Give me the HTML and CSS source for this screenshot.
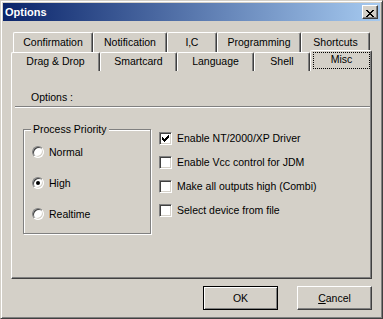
FILE: index.html
```html
<!DOCTYPE html>
<html lang="en">
<head>
    <meta charset="UTF-8">
    <meta name="viewport" content="width=device-width, initial-scale=1.0">
    <title>Options</title>
    <link rel="stylesheet" href="styles.css">
</head>
<body>
    <div class="window">
        <div class="titlebar">
            <span class="title">Options</span>
            <button class="close" aria-label="Close">
                <svg width="8" height="7" viewBox="0 0 8 7" shape-rendering="crispEdges">
                    <path d="M0 0h2v1H0zM6 0h2v1H6zM1 1h2v1H1zM5 1h2v1H5zM2 2h4v1H2zM3 3h2v1H3zM2 4h4v1H2zM1 5h2v1H1zM5 5h2v1H5zM0 6h2v1H0zM6 6h2v1H6z" fill="#000"/>
                </svg>
            </button>
        </div>

        <div class="dialog">
            <div class="tabs">
                <div class="tab-row back">
                    <div class="tab">Confirmation</div>
                    <div class="tab">Notification</div>
                    <div class="tab">I&#x201A;C</div>
                    <div class="tab">Programming</div>
                    <div class="tab">Shortcuts</div>
                </div>
                <div class="tab-row front">
                    <div class="tab">Drag &amp; Drop</div>
                    <div class="tab">Smartcard</div>
                    <div class="tab">Language</div>
                    <div class="tab">Shell</div>
                    <div class="tab selected"><span class="focus">Misc</span></div>
                </div>
            </div>

            <div class="panel">
                <div class="panel-head">Options :</div>
                <div class="separator"></div>
                <div class="panel-body">
                    <div class="group">
                        <div class="group-title">Process Priority</div>
                        <div class="radios">
                            <label class="radio-row"><span class="radio"></span>Normal</label>
                            <label class="radio-row"><span class="radio on"></span>High</label>
                            <label class="radio-row"><span class="radio"></span>Realtime</label>
                        </div>
                    </div>
                    <div class="checks">
                        <label class="check-row">
                            <span class="box">
                                <svg width="7" height="7" viewBox="0 0 7 7" shape-rendering="crispEdges">
                                    <path d="M6 0h1v1H6zM5 1h2v1H5zM0 2h1v1H0zM4 2h3v1H4zM0 3h2v1H0zM3 3h3v1H3zM0 4h5v1H0zM1 5h3v1H1zM2 6h1v1H2z" fill="#000"/>
                                </svg>
                            </span>Enable NT/2000/XP Driver
                        </label>
                        <label class="check-row"><span class="box"></span>Enable Vcc control for JDM</label>
                        <label class="check-row"><span class="box"></span>Make all outputs high (Combi)</label>
                        <label class="check-row"><span class="box"></span>Select device from file</label>
                    </div>
                </div>
            </div>

            <div class="buttons">
                <button class="btn default">OK</button>
                <button class="btn"><u>C</u>ancel</button>
            </div>
        </div>
    </div>
</body>
</html>
```

FILE: styles.css
```css
* {
  margin: 0;
  padding: 0;
  box-sizing: border-box;
}
body {
  margin: 0;
  background: #d4d0c8;
  font-family: "Liberation Sans", Arial, sans-serif;
  font-size: 10.5px;
  color: #000;
}

.window {
  width: 383px;
  height: 319px;
  padding: 2px;
  display: flex;
  flex-direction: column;
  background: #d4d0c8;
  border: 1px solid;
  border-color: #d4d0c8 #404040 #404040 #d4d0c8;
  box-shadow: inset 1px 1px #fff, inset -1px -1px #808080;
}

.titlebar {
  height: 18px;
  display: flex;
  justify-content: space-between;
  align-items: flex-start;
  padding: 0 2px;
  background: linear-gradient(to right, #0a246a, #a6caf0);
}
.title {
  color: #fff;
  font-weight: bold;
  font-size: 11px;
  line-height: 18px;
}
.close {
  width: 16px;
  height: 14px;
  margin-top: 2px;
  background: #d4d0c8;
  border: 1px solid;
  border-color: #fff #404040 #404040 #fff;
  box-shadow: inset -1px -1px #808080;
}
.close svg {
  display: block;
  margin: 2px auto 0;
}

.dialog {
  flex: 1;
  padding: 11px 8px 0;
}

/* tab strip, two rows */
.tab-row {
  display: grid;
}
.tab-row.back {
  grid-template-columns: 80px 74px 50px 84px 69px;
  height: 20px;
  margin: 0 2px;
}
.tab-row.front {
  grid-template-columns: 89px 77px 77px 56px 62px;
  height: 18px;
}
.tab {
  background: #d4d0c8;
  border: 1px solid;
  border-bottom: 0;
  border-color: #fff #404040 #404040 #fff;
  border-radius: 2px 2px 0 0;
  box-shadow: inset -1px 0 #808080;
  text-align: center;
  white-space: nowrap;
}
.back .tab {
  line-height: 19px;
}
.front .tab {
  line-height: 17px;
}
.tab.selected {
  position: relative;
  z-index: 1;
  align-self: start;
  height: 21px;
  margin-top: -2px;
}
.tab.selected .focus {
  display: block;
  height: 17px;
  margin: 1px 1px 0 2px;
  border: 1px dotted #000;
  line-height: 12px;
}

.panel {
  height: 209px;
  border: 1px solid;
  border-color: #fff #404040 #404040 #fff;
  box-shadow: inset -1px -1px #808080;
}
.panel-head {
  padding: 19px 0 0 19px;
  line-height: 14px;
}
.separator {
  margin: 2px 1px 0 3px;
  border-top: 1px solid #808080;
  border-bottom: 1px solid #fff;
}
.panel-body {
  display: flex;
  align-items: flex-start;
  padding: 21px 0 0 11px;
}

.group {
  width: 128px;
  height: 105px;
  border: 1px solid #808080;
  box-shadow: inset 1px 1px #fff, 1px 1px #fff;
}
.group-title {
  width: fit-content;
  margin: -8px 0 0 7px;
  padding: 0 2px;
  background: #d4d0c8;
  line-height: 14px;
}
.radios {
  display: flex;
  flex-direction: column;
  gap: 11px;
  padding: 6px 0 0 8px;
}
.radio-row {
  height: 20px;
  display: flex;
  align-items: center;
  gap: 5px;
}
.radio {
  width: 12px;
  height: 12px;
  display: flex;
  align-items: center;
  justify-content: center;
  border-radius: 50%;
  background: #fff;
  border: 1px solid;
  border-color: #808080 #fff #fff #808080;
  box-shadow: inset 1px 1px #404040, inset -1px -1px #d4d0c8;
}
.radio.on::after {
  content: "";
  width: 4px;
  height: 4px;
  border-radius: 50%;
  background: #000;
}

.checks {
  display: flex;
  flex-direction: column;
  gap: 6px;
  margin-left: 8px;
}
.check-row {
  height: 18px;
  display: flex;
  align-items: center;
  gap: 5px;
  white-space: nowrap;
}
.box {
  width: 13px;
  height: 13px;
  padding: 2px;
  background: #fff;
  border: 1px solid;
  border-color: #808080 #fff #fff #808080;
  box-shadow: inset 1px 1px #404040, inset -1px -1px #d4d0c8;
}
.box svg {
  display: block;
}

.buttons {
  display: flex;
  justify-content: flex-end;
  gap: 19px;
  margin-top: 7px;
}
.btn {
  width: 75px;
  height: 24px;
  font: inherit;
  color: #000;
  background: #d4d0c8;
  border: 1px solid;
  border-color: #fff #404040 #404040 #fff;
  box-shadow: inset -1px -1px #808080;
}
.btn.default {
  border-color: #000;
  box-shadow: inset 1px 1px #fff, inset -1px -1px #808080;
}
.btn u {
  text-decoration: underline;
}
```
